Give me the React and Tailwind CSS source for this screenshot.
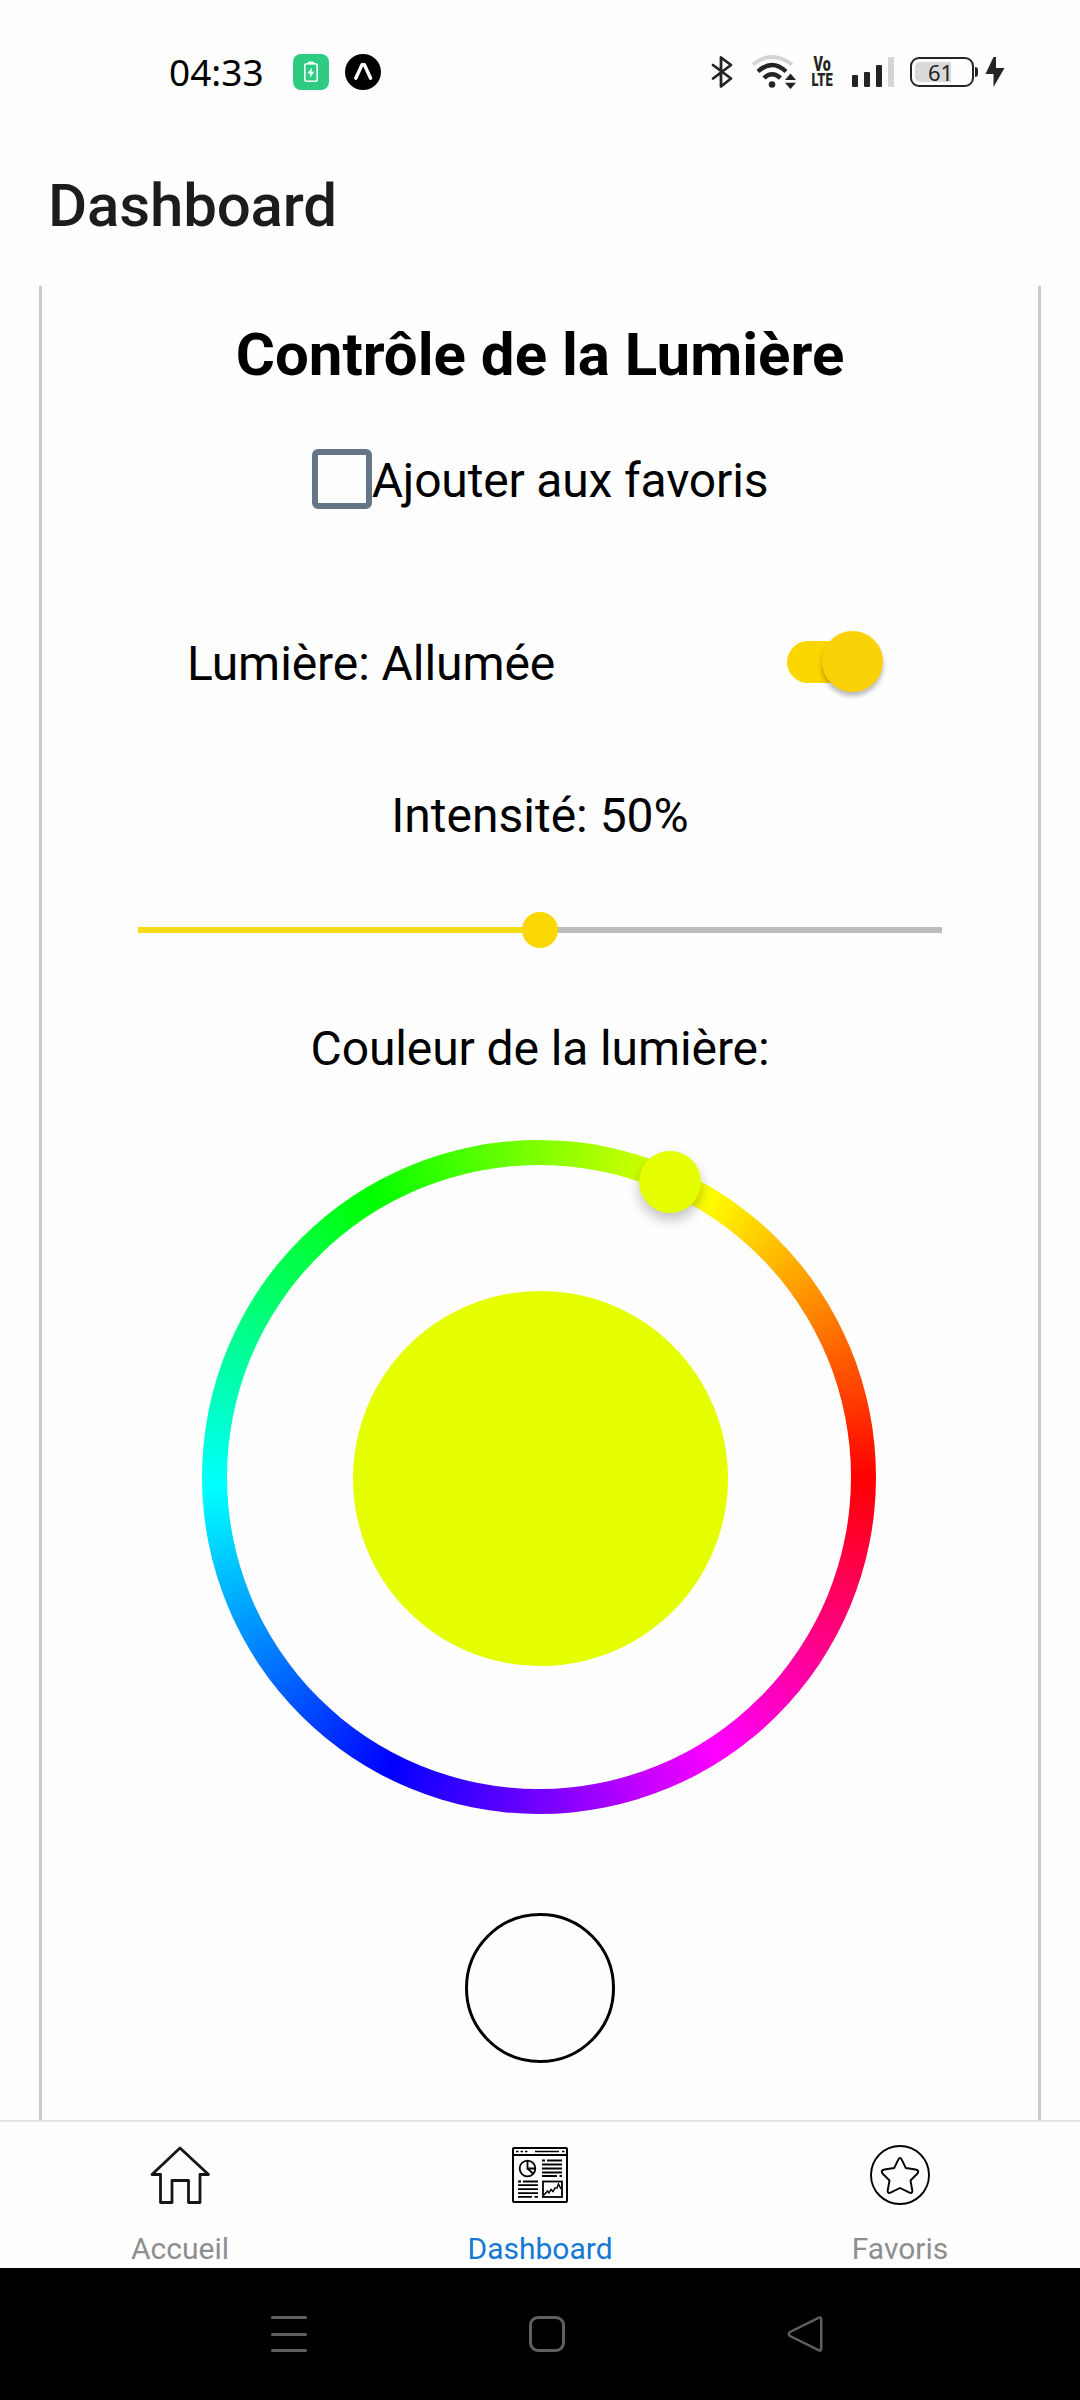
import React from "react";

function StatusBar() {
  return (
    <div className="flex h-[142px] items-start pt-[54px] pl-[169px] pr-[75px]">
      <div className="flex h-9 w-full items-center">
        <span className="w-[124px] font-['Noto_Sans'] text-[37px] leading-9 text-black">04:33</span>
        <svg className="h-9 w-9" viewBox="0 0 36 36">
          <rect width="36" height="36" rx="8" fill="#2dcc80" />
          <rect x="11.8" y="9.8" width="12.4" height="17.4" rx="2" fill="none" stroke="#fff" strokeWidth="1.6" />
          <rect x="15" y="7.6" width="6" height="2.6" rx="1" fill="#fff" />
          <path d="M19 13.5l-4.5 6h3l-.7 4.2 4.6-6h-3z" fill="#fff" />
        </svg>
        <svg className="ml-4 h-9 w-9" viewBox="0 0 36 36">
          <circle cx="18" cy="18" r="18" fill="#000" />
          <path d="M10.8 24.2L17 10.8h2.400L25.6 24.2" fill="none" stroke="#fff" strokeWidth="3.400" strokeLinejoin="round" strokeLinecap="round" />
        </svg>
        <svg className="ml-auto h-9 w-[22px]" viewBox="0 0 22 36" fill="none" stroke="#242424" strokeWidth="2.8" strokeLinejoin="round" strokeLinecap="round">
          <path d="M2 11L20 24.5L10 32.5V3.5L20 11L2 24.5" />
        </svg>
        <svg className="ml-[18px] h-9 w-[46px]" viewBox="0 0 46 36" fill="none">
          <path d="M2 10.5Q20.500 -4.500 41 10.5" stroke="#d4d4d4" strokeWidth="4" />
          <path d="M7 17.5Q21 4.500 35 17.500" stroke="#242424" strokeWidth="4.400" />
          <path d="M13 24Q21 16.500 29.500 24" stroke="#242424" strokeWidth="4.400" />
          <circle cx="21" cy="30.500" r="3.300" fill="#242424" />
          <path d="M39.500 19.500l5.500 6.500h-11zM39.500 35l5.500-6.200h-11z" fill="#242424" />
        </svg>
        <div className="ml-[13px] flex h-[32px] w-[24px] justify-center">
          <p className="shrink-0 scale-x-[.68] text-center font-[Roboto,sans-serif] text-[19px] font-black leading-[16px] text-[#242424] first-line:text-[21px]">Vo<br />LTE</p>
        </div>
        <div className="ml-[18px] flex h-[30px] items-end gap-[6px]">
          <div className="h-3 w-1.5 rounded-[1px] bg-[#242424]" />
          <div className="h-[15px] w-1.5 rounded-[1px] bg-[#242424]" />
          <div className="h-[22px] w-1.5 rounded-[1px] bg-[#242424]" />
          <div className="h-[30px] w-1.5 rounded-[1px] bg-[#d4d4d4]" />
        </div>
        <div className="ml-4 flex h-[30px] w-[64px] rounded-[9px] border-2 border-[#242424] p-[3px]">
          <div className="flex h-5 w-9 items-center justify-center rounded-l-[5px] bg-[#d9d9d9] pl-[15px] font-['Noto_Sans'] text-[22px] text-[#242424]">61</div>
        </div>
        <div className="ml-px h-2.5 w-[3px] rounded-r-sm bg-[#242424]" />
        <svg className="ml-[7px] h-9 w-5" viewBox="0 0 20 36">
          <path d="M8.500 3L.500 20H8.500V33L19.500 14H11V3z" fill="#242424" />
        </svg>
      </div>
    </div>
  );
}

function Toggle() {
  return (
    <div className="relative flex h-[61px] w-[96px] items-center">
      <div className="h-[42px] w-[84px] rounded-full bg-[#fdd600]" />
      <div className="absolute right-0 top-0 h-[61px] w-[61px] rounded-full bg-[#fad207] shadow-[0_4px_5px_rgba(0,0,0,0.28)]" />
    </div>
  );
}

function Slider() {
  return (
    <div className="relative flex h-9 w-[804px] items-center">
      <div className="h-1.5 w-1/2 bg-[#f4dc16]" />
      <div className="h-1.5 w-1/2 bg-[#bdbdbd]" />
      <div className="absolute left-[384px] top-0 h-9 w-9 rounded-full bg-[#fbd704]" />
    </div>
  );
}

function ColorWheel() {
  return (
    <div className="relative flex h-[674px] w-[674px] items-center justify-center rounded-full bg-[conic-gradient(from_90deg,#f00_0deg,#f0f_57deg,#00f_117deg,#0ff_178deg,#0f0_239deg,#ff0_301deg,#f00_360deg)]">
      <div className="flex h-[624px] w-[624px] items-center justify-center rounded-full bg-[#fefefe] pt-0.5 pl-0.5">
        <div className="h-[375px] w-[375px] rounded-full bg-[#e5ff00]" />
      </div>
      <div className="absolute left-[437px] top-[11px] h-[62px] w-[62px] rounded-full bg-[#e5ff00] shadow-[0_7px_13px_rgba(0,0,0,0.24)]" />
    </div>
  );
}

function HomeIcon() {
  return (
    <svg className="h-[60px] w-[60px]" viewBox="0 0 60 60" fill="none" stroke="#161616" strokeWidth="2.8" strokeLinejoin="round">
      <path d="M30 3L2 29.500H10.500V57.500H22V35.500H38.500V57.500H50V29.500H58.500Z" />
    </svg>
  );
}

function DashboardIcon() {
  return (
    <svg className="h-[60px] w-[60px]" viewBox="0 0 60 60" fill="none" stroke="#000" strokeWidth="1.8">
      <rect x="3" y="3" width="54" height="54" rx="1" strokeWidth="2" />
      <path d="M3 10H57" />
      <path d="M6 6.500H8.500M10.500 6.500H13M15 6.500H17.500M25 6.500H49M52 6.500H54.500" strokeWidth="1.300" />
      <circle cx="17.500" cy="23.500" r="7.800" />
      <path d="M17.500 15.700V23.500H25.300M17.500 23.500L23.500 29" />
      <path d="M32 15.500H35M37 15.500H52M32 19.500H52M32 23.500H52M32 27.500H52M32 31H47M49.500 31H52" />
      <path d="M8 36.500H11M13 36.500H28M8 40.200H28M8 44.200H28M8 48.200H28M8 51.800H22M24.500 51.800H28" />
      <rect x="33" y="36.500" width="19" height="15.500" />
      <path d="M34 50L37.500 46L39 48L41 44.500L43 46.500L45 43H47L48.500 39L51 44" strokeWidth="1.500" />
    </svg>
  );
}

function FavoriteIcon() {
  return (
    <svg className="h-[60px] w-[60px]" viewBox="0 0 60 60" fill="none" stroke="#000" strokeWidth="1.900" strokeLinejoin="round">
      <circle cx="30" cy="30" r="29" />
      <path d="M28.500 14.200Q30 11.500 31.500 14.200L35.800 23L45.500 24.500Q49.800 25.500 47.500 28.500L40.500 35.500L42.300 45.500Q42.500 48.800 39.500 47.700L30 43L20.500 47.700Q17.500 48.800 17.700 45.500L19.500 35.500L12.500 28.500Q10.200 25.500 14.500 24.500L24.200 23Z" />
    </svg>
  );
}

function Tab({ icon, label, active }) {
  return (
    <div className="flex flex-1 flex-col items-center pt-[23px]">
      {icon}
      <span className={active ? "mt-[27px] text-[30px] leading-[34px] text-[#1578d3]" : "mt-[27px] text-[30px] leading-[34px] text-[#8e8e8f]"}>{label}</span>
    </div>
  );
}

export default function App() {
  return (
    <div className="flex h-[2400px] w-[1080px] flex-col overflow-hidden bg-[#fefefe] font-[Roboto,sans-serif] text-black">
      <StatusBar />
      <header className="flex h-[144px] shrink-0 items-start border-b border-[#fafafa] pl-12 pt-[29px]">
        <h1 className="text-[60px] font-medium leading-[70px] tracking-[-0.15px] text-[#1c1c1e]">Dashboard</h1>
      </header>
      <main className="mx-[39px] flex h-[1834px] shrink-0 flex-col items-center border-x-[3px] border-[#ccc]">
        <h2 className="mt-[34px] text-[60px] font-bold leading-[70px]">Contrôle de la Lumière</h2>
        <div className="mt-[59px] flex h-[60px] items-center">
          <div className="h-[60px] w-[60px] rounded-md border-[6px] border-[#657786]" />
          <span className="pt-[3px] text-[48px] leading-[56px] tracking-[-0.16px]">Ajouter aux favoris</span>
        </div>
        <div className="mt-[122px] flex w-[708px] items-center justify-between pl-px pr-[11px]">
          <span className="pt-1 text-[48px] leading-[56px] tracking-[-0.08px]">Lumière: Allumée</span>
          <Toggle />
        </div>
        <p className="mt-[96px] text-[48px] leading-[56px]">Intensité: 50%</p>
        <div className="mt-[68px]">
          <Slider />
        </div>
        <p className="mt-[73px] text-[48px] leading-[56px] tracking-[-0.1px]">Couleur de la lumière:</p>
        <div className="mr-[2px] mt-[63px]">
          <ColorWheel />
        </div>
        <div className="mt-[99px] h-[150px] w-[150px] rounded-full border-[3px] border-black" />
      </main>
      <nav className="flex h-[148px] shrink-0 border-t-2 border-[#e6e6e6] bg-[#fefefe]">
        <Tab icon={<HomeIcon />} label="Accueil" />
        <Tab icon={<DashboardIcon />} label="Dashboard" active />
        <Tab icon={<FavoriteIcon />} label="Favoris" />
      </nav>
      <footer className="flex h-[132px] shrink-0 items-start bg-black pl-[271px] pt-12">
        <div className="flex h-9 w-9 flex-col justify-between">
          <div className="h-[3px] rounded-full bg-[#606060]" />
          <div className="h-[3px] rounded-full bg-[#606060]" />
          <div className="h-[3px] rounded-full bg-[#606060]" />
        </div>
        <div className="ml-[222px] h-9 w-9 rounded-[9px] border-[3px] border-[#606060]" />
        <svg className="ml-[222px] h-9 w-9" viewBox="0 0 36 36" fill="none" stroke="#606060" strokeWidth="2.500" strokeLinejoin="round">
          <path d="M31.500 1.800Q34.200 .500 34.200 3.500V32.500Q34.200 35.500 31.500 34.200L3 20Q.500 18 3 16Z" />
        </svg>
      </footer>
    </div>
  );
}
